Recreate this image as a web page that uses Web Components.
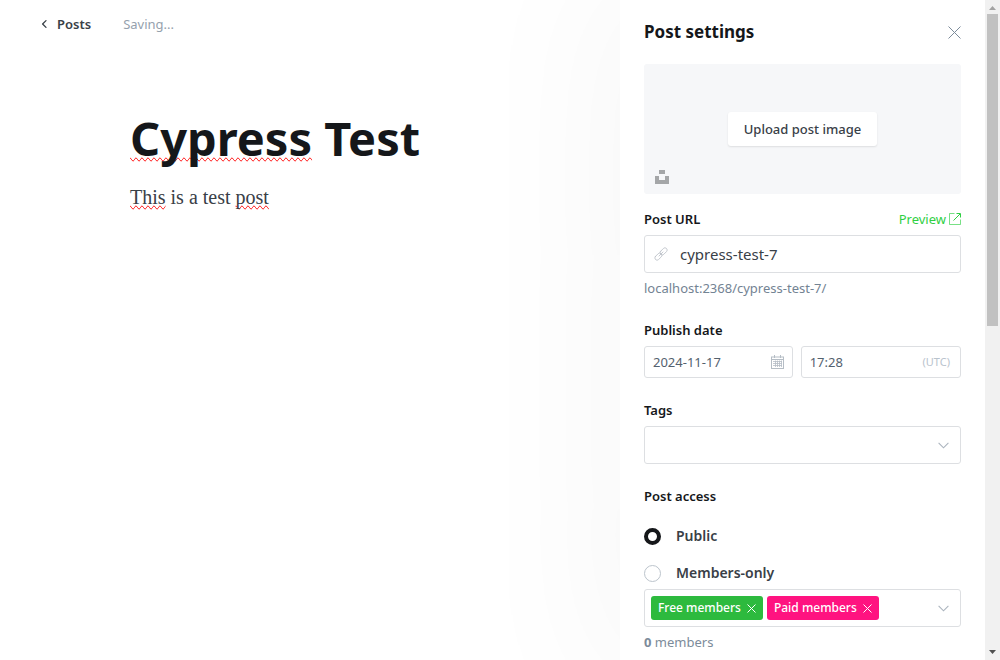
<!DOCTYPE html>
<html lang="en">
<head>
<meta charset="utf-8">
<title>Post editor</title>
<style>
  html, body { height: 100%; }
  body {
    margin: 0;
    background: #fff;
    color: #15171a;
    font-family: "Noto Sans", "Open Sans", sans-serif;
    font-size: 13px;
    line-height: 20px;
  }
</style>
</head>
<body>
<editor-app></editor-app>
<script>
const define = (name, markup) => {
  const template = document.createElement('template');
  template.innerHTML = `<style>
    *, *::before, *::after { box-sizing: border-box; }
    input, select, button { font: inherit; color: inherit; margin: 0; }
    button { border: 0; padding: 0; background: none; cursor: pointer; }
    svg { display: block; }
  </style>` + markup;
  customElements.define(name, class extends HTMLElement {
    constructor() {
      super();
      this.attachShadow({ mode: 'open' }).append(template.content.cloneNode(true));
    }
  });
};

define('editor-header', `
  <style>
    :host { display: flex; align-items: center; gap: 32px; height: 48px; padding-left: 40px; }
    a { display: flex; align-items: center; gap: 8px; color: #394047; font-weight: 600; text-decoration: none; }
    span { color: #95a1ad; }
  </style>
  <a href="#posts">
    <svg width="9" height="10" viewBox="0 0 9 10" fill="none" stroke="#394047" stroke-width="1.3" stroke-linecap="round" stroke-linejoin="round"><path d="M6 1.6 2.6 5 6 8.4"/></svg>
    Posts
  </a>
  <span role="status">Saving...</span>
`);

define('post-editor', `
  <style>
    :host { display: block; padding: 60px 40px 0 130px; }
    h1 { margin: 0; font-size: 47px; line-height: 60px; font-weight: 700; color: #15171a; outline: 0; }
    p { margin: 15px 0 0; font: 20px/28px "Liberation Serif", serif; color: #394047; outline: 0; }
    .typo { text-decoration-line: spelling-error; }
  </style>
  <h1 contenteditable="true" spellcheck="false" aria-label="Post title"><span class="typo">Cypress</span> Test</h1>
  <p contenteditable="true" spellcheck="false" aria-label="Post body"><span class="typo">This</span> is a test <span class="typo">post</span></p>
`);

define('panel-header', `
  <style>
    :host { display: flex; align-items: center; justify-content: space-between; height: 64px; }
    h2 { margin: 0; font-size: 17px; line-height: 24px; font-weight: 700; }
  </style>
  <h2><slot></slot></h2>
  <button type="button" aria-label="Close">
    <svg width="13" height="13" viewBox="0 0 13 13" fill="none" stroke="#7c8b9a" stroke-width="1"><path d="M.5.5l12 12M12.5.5l-12 12"/></svg>
  </button>
`);

define('image-uploader', `
  <style>
    :host { display: grid; grid-template-columns: 1fr auto 1fr; align-items: center; height: 130px; padding: 0 11px; border-radius: 3px; background: #f6f7f9; }
    .upload { height: 34px; padding: 0 16px; border-radius: 3px; background: #fff; color: #394047; font-weight: 500; box-shadow: 0 1px 2px rgba(0, 0, 0, .1); }
    .unsplash { align-self: end; justify-self: start; padding-bottom: 10px; }
  </style>
  <button class="unsplash" type="button" aria-label="Choose from Unsplash">
    <svg width="14" height="14" viewBox="0 0 14 14" fill="#a4a6a8"><path d="M4 0h6v4H4zM0 6h4v4h6V6h4v8H0z"/></svg>
  </button>
  <button class="upload" type="button"><slot></slot></button>
`);

define('url-field', `
  <style>
    :host { display: block; }
    .top { display: flex; justify-content: space-between; margin-bottom: 6px; }
    label { font-weight: 600; }
    a { display: flex; align-items: center; gap: 3px; color: #30cf43; text-decoration: none; }
    .box { display: flex; align-items: center; height: 38px; padding: 0 9px; gap: 12px; border: 1px solid #dddfe2; border-radius: 3px; }
    input { flex: 1; min-width: 0; padding: 0; border: 0; outline: 0; background: none; font-size: 15px; color: #394047; }
    p { margin: 5px 0 0; color: #738393; }
  </style>
  <div class="top">
    <label for="slug">Post URL</label>
    <a href="#preview">Preview
      <svg width="12" height="12" viewBox="0 0 12 12" fill="none" stroke="#30cf43"><path d="M5.5.5h-5v11h11v-5" stroke-opacity=".65"/><path d="M4.5 7.5 11 1M7.5.5h4v4"/></svg>
    </a>
  </div>
  <div class="box">
    <svg width="14" height="14" viewBox="0 0 14 14" fill="none" stroke="#bcc1c7" stroke-width=".8" stroke-linecap="round">
      <g transform="rotate(-45 7 7)"><rect x="-.8" y="4.8" width="8.2" height="4.4" rx="2.2"/><rect x="6.6" y="4.8" width="8.2" height="4.4" rx="2.2"/><path d="M4.2 7h5.6"/></g>
    </svg>
    <input id="slug" type="text" value="cypress-test-7">
  </div>
  <p>localhost:2368/cypress-test-7/</p>
`);

define('date-field', `
  <style>
    :host { display: block; }
    label { display: block; margin-bottom: 6px; font-weight: 600; }
    .row { display: flex; gap: 8px; }
    .box { display: flex; align-items: center; flex: 160 1 0; min-width: 0; height: 32px; padding: 0 10px 0 8px; border: 1px solid #dddfe2; border-radius: 3px; }
    .box.date { flex-grow: 149; padding-right: 8px; }
    input { flex: 1; min-width: 0; padding: 0; border: 0; outline: 0; background: none; color: #54616e; }
    span { font-size: 11px; color: #b9c3cd; }
  </style>
  <label for="date">Publish date</label>
  <div class="row">
    <div class="box date">
      <input id="date" type="text" value="2024-11-17">
      <svg width="13" height="14" viewBox="0 0 13 14" fill="none" stroke="#b5bdc5"><rect x=".5" y="2" width="12" height="11.5"/><path d="M.5 4.5h12M3.5 0v3M9.5 0v3"/><path d="M2 6.5h9M2 8.5h9M2 10.5h9M4.5 5.5v6.5M6.5 5.5v6.5M8.5 5.5v6.5M10.5 5.5v6.5" stroke-width=".8"/></svg>
    </div>
    <div class="box">
      <input type="text" value="17:28" aria-label="Publish time">
      <span>(UTC)</span>
    </div>
  </div>
`);

define('tags-field', `
  <style>
    :host { display: block; }
    label { display: block; margin-bottom: 6px; font-weight: 600; }
    .wrap { display: grid; align-items: center; }
    .wrap > * { grid-area: 1 / 1; }
    select { width: 100%; height: 38px; padding: 0 32px 0 8px; appearance: none; border: 1px solid #dddfe2; border-radius: 3px; background: #fff; outline: 0; }
    svg { justify-self: end; margin-right: 12px; pointer-events: none; }
  </style>
  <label for="tags">Tags</label>
  <div class="wrap">
    <select id="tags"><option value=""></option></select>
    <svg width="11" height="7" viewBox="0 0 11 7" fill="none" stroke="#abb4be" stroke-width="1.1"><path d="M.6.8 5.5 5.8 10.4.8"/></svg>
  </div>
`);

define('member-token', `
  <style>
    :host { display: flex; align-items: center; gap: 6px; height: 24px; padding: 0 7px; border-radius: 3px; background: var(--token-color); color: #fff; font-size: 12px; font-weight: 500; white-space: nowrap; }
  </style>
  <slot></slot>
  <button type="button" aria-label="Remove">
    <svg width="9" height="9" viewBox="0 0 9 9" fill="none" stroke="#fff" stroke-width="1"><path d="M.5.5l8 8M8.5.5l-8 8"/></svg>
  </button>
`);

define('access-field', `
  <style>
    :host { display: block; }
    fieldset { min-width: 0; margin: 0; padding: 0; border: 0; }
    legend { padding: 0; margin-bottom: 20px; font-weight: 600; }
    .option { display: flex; align-items: center; gap: 15px; font-size: 14px; font-weight: 600; color: #394047; }
    .option + .option { margin-top: 17px; }
    input { appearance: none; width: 17px; height: 17px; border: 1px solid #bcc4cc; border-radius: 50%; background: #fff; }
    input:checked { border: 4px solid #15171a; }
    .tokens { display: flex; align-items: center; gap: 4px; height: 38px; margin-top: 6px; padding: 0 11px 0 6px; border: 1px solid #dddfe2; border-radius: 3px; }
    .open { margin-left: auto; }
    member-token { --token-color: #2dba3e; }
    member-token.paid { --token-color: #ff1380; }
    p { margin: 5px 0 0; color: #7c8b9a; }
    b { font-weight: 700; }
  </style>
  <fieldset>
    <legend>Post access</legend>
    <label class="option"><input type="radio" name="access" checked>Public</label>
    <label class="option"><input type="radio" name="access">Members-only</label>
    <div class="tokens">
      <member-token>Free members</member-token>
      <member-token class="paid">Paid members</member-token>
      <button class="open" type="button" aria-label="Open member list">
        <svg width="11" height="7" viewBox="0 0 11 7" fill="none" stroke="#abb4be" stroke-width="1.1"><path d="M.6.8 5.5 5.8 10.4.8"/></svg>
      </button>
    </div>
    <p><b>0</b> members</p>
  </fieldset>
`);

define('scroll-rail', `
  <style>
    :host { display: flex; flex-direction: column; align-items: center; flex: none; width: 15px; background: #f1f1f1; }
    svg { flex: none; }
    .track { flex: 1; align-self: stretch; padding: 0 2px; }
    .thumb { height: 49.5%; background: #c1c1c1; }
  </style>
  <svg width="15" height="14" viewBox="0 0 15 14"><path d="M4 10 7.5 6 11 10z" fill="#a3a3a3"/></svg>
  <div class="track"><div class="thumb"></div></div>
  <svg width="15" height="15" viewBox="0 0 15 15"><path d="M4 5 7.5 9 11 5z" fill="#505050"/></svg>
`);

define('settings-panel', `
  <style>
    :host { display: flex; background: #fff; box-shadow: 0 0 150px 30px rgba(0, 0, 0, .03); }
    .content { flex: 1; min-width: 0; padding: 0 24px; overflow: hidden; }
    .fields { display: flex; flex-direction: column; gap: 22px; padding-top: 15px; }
  </style>
  <div class="content">
    <panel-header>Post settings</panel-header>
    <image-uploader>Upload post image</image-uploader>
    <div class="fields">
      <url-field></url-field>
      <date-field></date-field>
      <tags-field></tags-field>
      <access-field></access-field>
    </div>
  </div>
  <scroll-rail aria-hidden="true"></scroll-rail>
`);

define('editor-app', `
  <style>
    :host { display: flex; height: 100vh; overflow: hidden; }
    main { flex: 1; min-width: 0; }
    settings-panel { flex: 0 0 380px; min-width: 0; }
  </style>
  <main>
    <editor-header></editor-header>
    <post-editor></post-editor>
  </main>
  <settings-panel></settings-panel>
`);
</script>
</body>
</html>
